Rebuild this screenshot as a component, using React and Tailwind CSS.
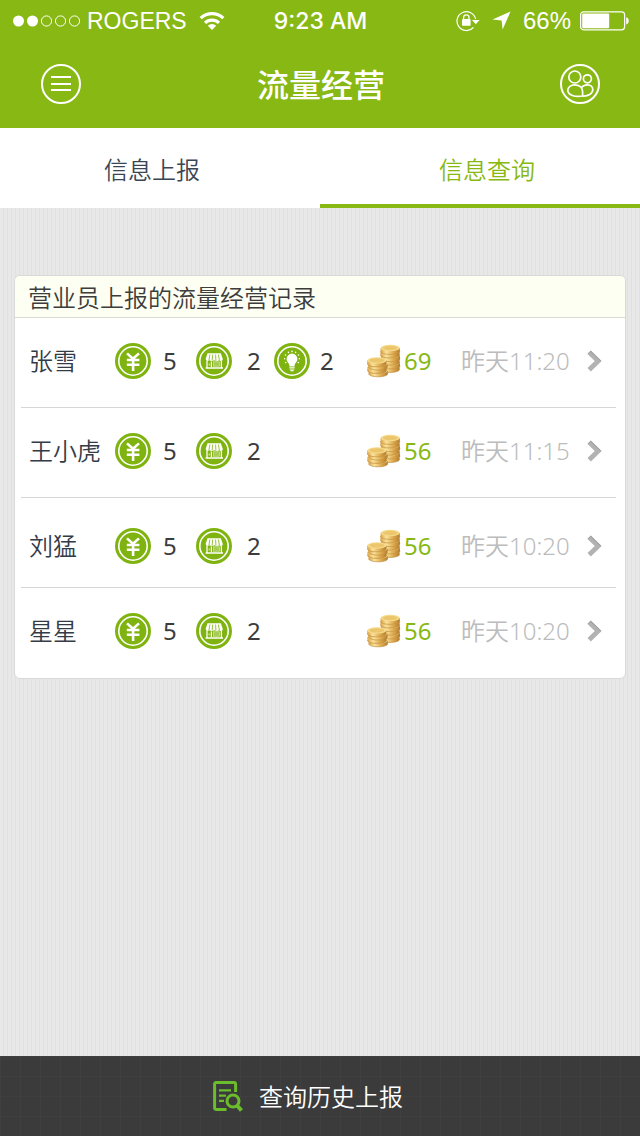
import React from 'react';

const records = [
  { name: '张雪', money: 5, store: 2, idea: 2, coins: 69, time: '昨天11:20', pad: 'pb-1' },
  { name: '王小虎', money: 5, store: 2, coins: 56, time: '昨天11:15', pad: 'pb-1' },
  { name: '刘猛', money: 5, store: 2, coins: 56, time: '昨天10:20', pad: 'pt-1.5' },
  { name: '星星', money: 5, store: 2, coins: 56, time: '昨天10:20', pad: 'pb-1' },
];

function Badge({ label, children }) {
  return (
    <svg role="img" aria-label={label} width="36" height="36" viewBox="0 0 36 36" className="block">
      <circle cx="18" cy="18" r="18" fill="#7fb30f" />
      <circle cx="18" cy="18" r="14.2" fill="none" stroke="#fff" strokeWidth="1.6" />
      {children}
    </svg>
  );
}

function YuanBadge() {
  return (
    <Badge label="金额">
      <path d="M12 10.4 L18 15.8 L24 10.4 M11.8 17 H24.4 M11.8 21.8 H24.4 M18.1 15.8 V28" fill="none" stroke="#fff" strokeWidth="2.6" />
    </Badge>
  );
}

function StoreBadge() {
  return (
    <Badge label="门店">
      <path d="M11.5 10.2 H24.8 L26.8 16 q0 2-1.8 2 t-2-.8 q-.6 .8-2 .8 t-2.8-.8 q-.8 .8-2.4 .8 t-2.4-.8 q-.6 .8-2 .8 t-1.8-2z" fill="#fff" />
      <path d="M13.9 11.5 L12.9 17.5 M16.7 11.5 L16.1 17.5 M19.6 11.5 L19.9 17.5 M22.4 11.5 L23.4 17.5" stroke="#7fb30f" strokeWidth="0.8" />
      <path d="M11 18 V24.5 M25.4 18 V24.5 M15.4 18.5 V24 M9.6 25 H27" stroke="#fff" strokeWidth="1.3" />
      <path d="M13.2 20.5 V22.5" stroke="#fff" strokeWidth=".8" />
      <rect x="17.4" y="18.8" width="6.2" height="4.4" fill="#a5cb55" stroke="#dcecb4" strokeWidth="0.6" />
    </Badge>
  );
}

function BulbBadge() {
  return (
    <Badge label="创意">
      <path d="M18 10.6 a5.4 5.4 0 0 1 5.4 5.4 c0 3-2.8 3.8-2.9 7 h-5 c-.1-3.2-2.9-4-2.9-7 a5.4 5.4 0 0 1 5.4-5.4z" fill="#fff" />
      <path d="M15.3 24.2 h5.4 M15.5 26 h5 M16.4 27.6 h3.2" stroke="#fff" strokeWidth="1.2" />
      <g fill="#fff">
        <circle cx="18" cy="8.4" r=".8" /><circle cx="14.4" cy="9.4" r=".8" /><circle cx="21.6" cy="9.4" r=".8" />
        <circle cx="11.5" cy="12" r=".8" /><circle cx="24.5" cy="12" r=".8" /><circle cx="10.6" cy="15.8" r=".8" />
        <circle cx="25.4" cy="15.8" r=".8" /><circle cx="11.7" cy="19.6" r=".8" /><circle cx="24.3" cy="19.6" r=".8" />
      </g>
    </Badge>
  );
}

function Coin({ x, y }) {
  return (
    <g transform={`translate(${x} ${y})`}>
      <path d="M0 0 v3.2 c0 2 4.4 3.2 9.6 3.2 s9.6-1.2 9.6-3.2 V0z" fill="url(#coinEdge)" />
      <path d="M0 3.2 c0 2 4.4 3.2 9.6 3.2 s9.6-1.2 9.6-3.2" fill="none" stroke="#b98430" strokeWidth=".6" />
      <ellipse cx="9.6" cy="0" rx="9.6" ry="3.2" fill="#f6da8c" />
      <ellipse cx="9.6" cy="0" rx="7.4" ry="2.2" fill="#ecc66c" />
    </g>
  );
}

function Coins() {
  return (
    <svg role="img" aria-label="金币" width="34" height="34" viewBox="0 0 34 34" className="block">
      <defs>
        <linearGradient id="coinEdge">
          <stop offset="0" stopColor="#dca244" />
          <stop offset=".3" stopColor="#fae29c" />
          <stop offset=".65" stopColor="#e0ac50" />
          <stop offset="1" stopColor="#b27e30" />
        </linearGradient>
      </defs>
      <Coin x={13.4} y={22} />
      <Coin x={13.8} y={18.5} />
      <Coin x={13.4} y={14.8} />
      <Coin x={13.8} y={11.2} />
      <Coin x={13.4} y={7.6} />
      <Coin x={13.6} y={4} />
      <Coin x={1.6} y={26.4} />
      <Coin x={.4} y={23} />
      <Coin x={1.4} y={19.6} />
      <Coin x={.2} y={16.4} />
    </svg>
  );
}

function Chevron() {
  return (
    <svg aria-hidden="true" width="16" height="22" viewBox="0 0 16 22" className="block">
      <path d="M2.2 2.2 L11.2 11 L2.2 19.8" fill="none" stroke="#b2b2b2" strokeWidth="4.8" />
      <path d="M1 3.8 L3.6 1.2 L13.8 11" fill="none" stroke="#9a9a9a" strokeWidth="1" />
    </svg>
  );
}

function StatusBar() {
  return (
    <div className="grid h-10 grid-cols-[1fr_auto_1fr] items-center pl-3 pr-[11px] font-['Liberation_Sans',sans-serif] text-[23px] leading-10">
      <div className="flex items-center">
        <svg aria-hidden="true" width="70" height="14" viewBox="0 0 70 14">
          <circle cx="6.5" cy="7" r="5.5" fill="#fff" />
          <circle cx="20.5" cy="7" r="5.5" fill="#fff" />
          <g fill="none" stroke="#fff">
            <circle cx="34.5" cy="7" r="5.1" /><circle cx="48.5" cy="7" r="5.1" /><circle cx="62.5" cy="7" r="5.1" />
          </g>
        </svg>
        <span className="ml-[5px] pt-px">ROGERS</span>
        <svg aria-hidden="true" width="26" height="20" viewBox="0 0 26 20" className="ml-3">
          <g fill="none" stroke="#fff" strokeWidth="3.2">
            <path d="M1.7 7.2 a16.5 16.5 0 0 1 22.6 0" />
            <path d="M6 11.9 a10.2 10.2 0 0 1 14 0" />
          </g>
          <path d="M13 19 L8.8 14.8 a6 6 0 0 1 8.4 0z" fill="#fff" />
        </svg>
      </div>
      <span className="pt-px font-['Inter',sans-serif] text-[23px] font-medium">9:23 AM</span>
      <div className="flex items-center justify-end">
        <svg aria-hidden="true" width="24" height="22" viewBox="0 0 24 22">
          <path d="M17.4 17.4 a9.4 9.4 0 1 1 2.2-8.2" fill="none" stroke="#fff" strokeWidth="1.2" />
          <path d="M16 10 h7.6 l-3.8 4.2z" fill="#fff" />
          <rect x="6" y="9" width="8.6" height="6.8" rx=".8" fill="#fff" />
          <path d="M7.6 9.5 V7.6 a2.7 2.7 0 0 1 5.4 0 V9.5" fill="none" stroke="#fff" strokeWidth="1.3" />
        </svg>
        <svg aria-hidden="true" width="19" height="19" viewBox="0 0 19 19" className="ml-3">
          <path d="M18.5 .5 L10.6 18.5 L9.6 9.6 L.5 8.4z" fill="#fff" />
        </svg>
        <span className="ml-3 pt-px text-[24px]">66%</span>
        <svg aria-hidden="true" width="49" height="20" viewBox="0 0 49 20" className="ml-[9px]">
          <rect x=".6" y=".8" width="44" height="18" rx="3" fill="none" stroke="#fff" strokeWidth="1.2" />
          <rect x="2.2" y="2.4" width="27" height="14.8" rx="1" fill="#fff" />
          <path d="M46.2 6.2 c3.4 .6 3.4 6.6 0 7.2z" fill="#fff" />
        </svg>
      </div>
    </div>
  );
}

function Header() {
  return (
    <header className="bg-[#88b814] text-white">
      <StatusBar />
      <div className="flex h-[88px] items-center justify-between px-10">
        <button type="button" aria-label="菜单" className="rounded-full">
          <svg width="42" height="42" viewBox="0 0 42 42" fill="none" stroke="#fff" strokeWidth="2" className="block">
            <circle cx="21" cy="21" r="19" />
            <path d="M11 14 H31 M11 21 H31 M11 27 H31" />
          </svg>
        </button>
        <h1 className="pb-0.5 font-['Noto_Sans_CJK_SC',sans-serif] text-[32px] font-medium leading-10">流量经营</h1>
        <button type="button" aria-label="联系人" className="rounded-full">
          <svg width="40" height="42" viewBox="0 0 40 42" fill="none" stroke="#fff" strokeWidth="1.7" className="block">
            <circle cx="20" cy="21" r="19" strokeWidth="2" />
            <circle cx="14.8" cy="14" r="6" />
            <circle cx="27.4" cy="15.8" r="4" />
            <path d="M22.6 33 C15 34.4 7.8 32 7.8 27.6 C7.8 24.2 11 21.8 14.6 21.8 C19.4 21.8 22.6 24.6 22.6 28.4z" />
            <path d="M22.6 33 C28 33.4 32.8 30.6 32.8 26.6 C32.8 23.8 30.4 21.8 27.6 21.8 C24.8 21.8 22.4 23 21.2 25" />
          </svg>
        </button>
      </div>
    </header>
  );
}

export default function App() {
  return (
    <div className="flex min-h-screen flex-col bg-[#e6e6e6] bg-[repeating-linear-gradient(90deg,#e8e8e8_0px,#e8e8e8_3px,#e0e0e0_3px,#e0e0e0_4px)] font-['Noto_Sans','Noto_Sans_CJK_SC',sans-serif] text-[24px] font-[350] text-[#3c3c3c]">
      <Header />
      <nav className="grid h-20 grid-cols-2 bg-white">
        <button type="button" className="border-b-4 border-transparent pt-2 pr-4 text-[#3b4654]">信息上报</button>
        <button type="button" aria-current="page" className="border-b-4 border-[#88b814] pt-2 pl-[14px] text-[#88b814]">信息查询</button>
      </nav>

      <main className="flex-1 px-[14px] pt-[67px] pb-8">
        <section className="overflow-hidden rounded-md border border-[#d9d9d9] bg-white">
          <h2 className="border-b border-[#d9dcd2] bg-[#fcfff2] pt-[3px] pb-px pl-[13px] text-[24px] leading-[37px] font-[350]">营业员上报的流量经营记录</h2>
          <ul className="pl-[6px] pr-[9px] pb-px">
            {records.map((r) => (
              <li key={r.name} className="border-b border-[#d6d6d6] last:border-b-0">
                <a href="#record" className={`grid h-[89px] grid-cols-[86px_48px_33px_51px_27px_46px_47px_37px_57px_1fr_auto] items-center pl-2 pr-[13px] leading-9 ${r.pad}`}>
                  <span className="whitespace-nowrap text-[#333b47]">{r.name}</span>
                  <YuanBadge />
                  <span className="font-normal">{r.money}</span>
                  <StoreBadge />
                  <span className="font-normal">{r.store}</span>
                  {r.idea ? <BulbBadge /> : <span />}
                  <span className="font-normal">{r.idea}</span>
                  <Coins />
                  <span className="font-normal text-[#88b814]">{r.coins}</span>
                  <time className="whitespace-nowrap text-[#bcbcbc]">{r.time}</time>
                  <Chevron />
                </a>
              </li>
            ))}
          </ul>
        </section>
      </main>

      <footer className="bg-[#3b3b3b] bg-[linear-gradient(#ffffff05_1px,transparent_1px),linear-gradient(90deg,#ffffff05_1px,transparent_1px)] bg-size-[20px_20px]">
        <button type="button" className="flex h-20 w-full items-center justify-center gap-4 pt-0.5 pr-6 text-white">
          <svg aria-hidden="true" width="30" height="32" viewBox="0 0 30 32" fill="none" stroke="#6cbd2c">
            <path d="M13.5 28.4 H3 Q1.6 28.4 1.6 27 V3 Q1.6 1.6 3 1.6 H21 Q22.6 1.6 22.6 3 V11" strokeWidth="3" />
            <path d="M6 9.4 H18 M6 14.6 H13 M6 19.8 H11" strokeWidth="2.2" />
            <circle cx="20" cy="20" r="6" strokeWidth="3" />
            <path d="M24 24.5 L28.5 29.5" strokeWidth="4" />
          </svg>
          <span>查询历史上报</span>
        </button>
      </footer>
    </div>
  );
}
